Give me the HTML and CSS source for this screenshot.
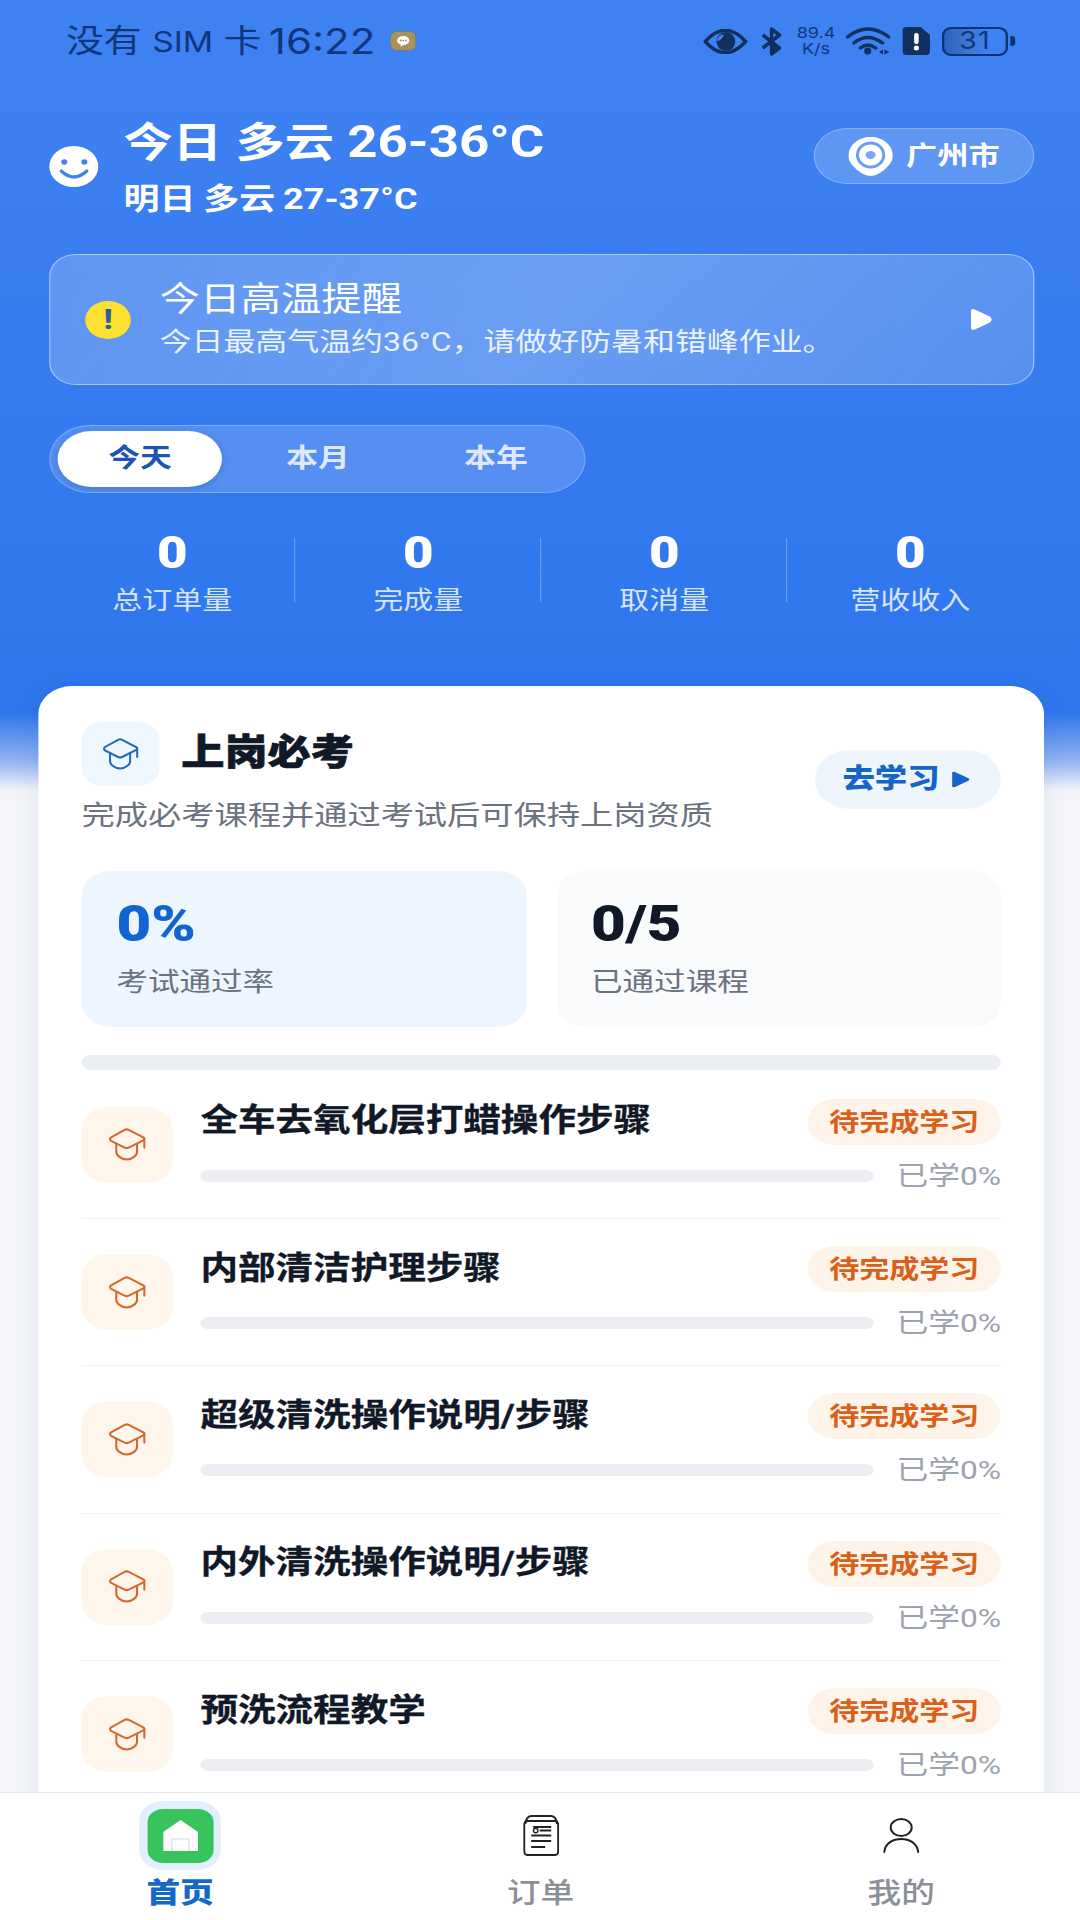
FILE: index.html
```html
<!DOCTYPE html>
<html lang="zh-CN">
<head>
<meta charset="utf-8">
<title>首页</title>
<link rel="stylesheet" href="styles.css">
</head>
<body>
<svg class="defs" width="0" height="0" aria-hidden="true">
  <symbol id="cap" viewBox="0 0 37 32" preserveAspectRatio="none">
    <path d="M16 1.8Q18 .8 20 1.8L34 9Q36 10.5 34 12L20 19Q18 20 16 19L3 12.5Q.8 10.5 3 9Z" fill="none" stroke="currentColor" stroke-width="2"/>
    <path d="M8 15.5V23Q8 26 11 28Q14 30.5 18 30.5Q22 30.5 25 28Q28 26 28 23V15.5M35 10V19" fill="none" stroke="currentColor" stroke-width="2" stroke-linecap="round"/>
  </symbol>
</svg>
<div class="app">
  <div class="status">
    <div class="status-left">
      <span class="carrier">没有 <span class="carrier-sim">SIM</span> 卡</span>
      <span class="clock">16:22</span>
      <svg class="ic-note" viewBox="0 0 26 20" preserveAspectRatio="none"><rect x=".5" y=".5" width="25" height="19" rx="6" fill="#a8935f" stroke="#6c7f86"/><ellipse cx="13" cy="9.5" rx="6" ry="4.6" fill="#fff"/><path d="M11 13l-1 3 4-2.5z" fill="#fff"/><circle cx="10.5" cy="9.5" r=".9" fill="#a8935f"/><circle cx="13" cy="9.5" r=".9" fill="#a8935f"/><circle cx="15.5" cy="9.5" r=".9" fill="#a8935f"/></svg>
    </div>
    <div class="status-right">
      <svg class="ic-eye" viewBox="0 0 45 25" preserveAspectRatio="none"><path d="M2 12.5Q22.5-10 43 12.5Q22.5 35 2 12.5Z" fill="none" stroke="#12305f" stroke-width="3.4"/><circle cx="23" cy="12.5" r="9.5" fill="#12305f"/><path d="M13.5 12Q19 12 21 5.5Q15.5 5 13.5 12Z" fill="#3f82f2"/></svg>
      <svg class="ic-bt" viewBox="0 0 22 29" preserveAspectRatio="none"><path d="M2 8L19 21L11 27V2L19 8L2 21" fill="none" stroke="#12305f" stroke-width="3.6" stroke-linejoin="round"/><path d="M11 15l8 6-8 6z" fill="#12305f"/></svg>
      <div class="speed"><span>89.4</span><span>K/s</span></div>
      <svg class="ic-wifi" viewBox="0 0 45 28" preserveAspectRatio="none"><path d="M1.5 10Q22-6 43.5 10M8 16Q22 5 37 16M14.5 21Q22 15 30 21" fill="none" stroke="#12305f" stroke-width="3.4" stroke-linecap="round"/><circle cx="22" cy="24" r="3.6" fill="#12305f"/><path d="M37.5 22.5v5l-4-2.500zM39 22.500v5l5-2.500z" fill="#12305f"/></svg>
      <svg class="ic-sim" viewBox="0 0 27 28" preserveAspectRatio="none"><path d="M4 0H18L27 8V24A4 4 0 0 1 23 28H4A4 4 0 0 1 0 24V4A4 4 0 0 1 4 0Z" fill="#12305f"/><rect x="11.500" y="6" width="4.400" height="11" rx="2" fill="#fff"/><circle cx="13.700" cy="21" r="2.500" fill="#fff"/></svg>
      <div class="battery"><span>31</span></div>
      <div class="battery-tip"></div>
    </div>
  </div>

  <div class="weather">
    <svg class="ic-smile" viewBox="0 0 49 41" preserveAspectRatio="none"><ellipse cx="24.500" cy="20.500" rx="24.500" ry="20.500" fill="#fff"/><ellipse cx="15" cy="16" rx="3" ry="2.700" fill="#3f82f2"/><ellipse cx="35" cy="16" rx="3" ry="2.700" fill="#3f82f2"/><path d="M12 25Q24.500 37 37.500 25" fill="none" stroke="#3f82f2" stroke-width="3.200" stroke-linecap="round"/></svg>
    <div class="weather-text">
      <div class="weather-now">今日 多云 <span class="num-now">26-36°C</span></div>
      <div class="weather-next">明日 多云 <span class="num-next">27-37°C</span></div>
    </div>
    <div class="city">
      <svg class="ic-pin" viewBox="0 0 44 39" preserveAspectRatio="none"><path d="M22 0C34 0 44 8 44 19C44 28 30 39 22 39C14 39 0 28 0 19C0 8 10 0 22 0Z" fill="#fff"/><ellipse cx="22" cy="18" rx="13" ry="12" fill="none" stroke="#6b9df3" stroke-width="3"/><ellipse cx="22" cy="18" rx="5" ry="4" fill="#7ba6f0"/></svg>
      <span>广州市</span>
    </div>
  </div>

  <div class="alert">
    <div class="alert-dot">!</div>
    <div class="alert-text">
      <div class="alert-title">今日高温提醒</div>
      <div class="alert-sub">今日最高气温约36°C，请做好防暑和错峰作业。</div>
    </div>
    <svg class="ic-play-w" viewBox="0 0 21 23" preserveAspectRatio="none"><path d="M4 1.500L18.500 8.500Q22 11.500 18.500 14.500L4 21.500Q0 23 0 19V4Q0 0 4 1.500Z" fill="#fff"/></svg>
  </div>

  <div class="segment">
    <div class="seg seg-on">今天</div>
    <div class="seg">本月</div>
    <div class="seg">本年</div>
  </div>

  <div class="stats">
    <div class="stat"><div class="stat-num">0</div><div class="stat-label">总订单量</div></div>
    <div class="stat"><div class="stat-num">0</div><div class="stat-label">完成量</div></div>
    <div class="stat"><div class="stat-num">0</div><div class="stat-label">取消量</div></div>
    <div class="stat"><div class="stat-num">0</div><div class="stat-label">营收收入</div></div>
  </div>

  <div class="card">
    <div class="card-head">
      <div class="card-head-left">
        <div class="card-title-row">
          <div class="cap-box"><svg class="ic-cap-blue"><use href="#cap"/></svg></div>
          <div class="card-title">上岗必考</div>
        </div>
        <div class="card-sub">完成必考课程并通过考试后可保持上岗资质</div>
      </div>
      <div class="go">
        <span>去学习</span>
        <svg class="ic-play-b" viewBox="0 0 16 17" preserveAspectRatio="none"><path d="M2.500 .800L15 7.300Q16.500 8.500 15 9.700L2.500 16.200Q.500 16.800 .500 15V2Q.500 .200 2.500 .800Z" fill="#1565c8"/></svg>
      </div>
    </div>

    <div class="boxes">
      <div class="box box-blue"><div class="box-val val-blue">0%</div><div class="box-label">考试通过率</div></div>
      <div class="box box-gray"><div class="box-val">0/5</div><div class="box-label">已通过课程</div></div>
    </div>
    <div class="bar-main"></div>

    <div class="row">
      <div class="row-icon"><svg class="ic-cap-orange"><use href="#cap"/></svg></div>
      <div class="row-body">
        <div class="row-top"><div class="row-title">全车去氧化层打蜡操作步骤</div><div class="badge">待完成学习</div></div>
        <div class="row-bottom"><div class="row-bar"></div><div class="row-pct">已学0%</div></div>
      </div>
    </div>
    <div class="row">
      <div class="row-icon"><svg class="ic-cap-orange"><use href="#cap"/></svg></div>
      <div class="row-body">
        <div class="row-top"><div class="row-title">内部清洁护理步骤</div><div class="badge">待完成学习</div></div>
        <div class="row-bottom"><div class="row-bar"></div><div class="row-pct">已学0%</div></div>
      </div>
    </div>
    <div class="row">
      <div class="row-icon"><svg class="ic-cap-orange"><use href="#cap"/></svg></div>
      <div class="row-body">
        <div class="row-top"><div class="row-title">超级清洗操作说明/步骤</div><div class="badge">待完成学习</div></div>
        <div class="row-bottom"><div class="row-bar"></div><div class="row-pct">已学0%</div></div>
      </div>
    </div>
    <div class="row">
      <div class="row-icon"><svg class="ic-cap-orange"><use href="#cap"/></svg></div>
      <div class="row-body">
        <div class="row-top"><div class="row-title">内外清洗操作说明/步骤</div><div class="badge">待完成学习</div></div>
        <div class="row-bottom"><div class="row-bar"></div><div class="row-pct">已学0%</div></div>
      </div>
    </div>
    <div class="row">
      <div class="row-icon"><svg class="ic-cap-orange"><use href="#cap"/></svg></div>
      <div class="row-body">
        <div class="row-top"><div class="row-title">预洗流程教学</div><div class="badge">待完成学习</div></div>
        <div class="row-bottom"><div class="row-bar"></div><div class="row-pct">已学0%</div></div>
      </div>
    </div>
  </div>

  <div class="tabbar">
    <div class="tab tab-on">
      <div class="tab-icon">
        <div class="home-halo"><div class="home-green">
          <svg class="ic-house" viewBox="0 0 35 31" preserveAspectRatio="none"><path d="M17.500 0L35 12V31H0V12Z" fill="#fff"/><path d="M8.700 31V19H26V31" fill="none" stroke="#d3dbd6" stroke-width="1"/></svg>
        </div></div>
      </div>
      <div class="tab-label">首页</div>
    </div>
    <div class="tab">
      <div class="tab-icon">
        <svg class="ic-order" viewBox="0 0 36 41" preserveAspectRatio="none"><rect x="1" y="6" width="34" height="34" rx="3.500" fill="none" stroke="#222" stroke-width="2"/><path d="M2 9Q3 1.500 8 1H28Q33 1.500 34 9" fill="none" stroke="#222" stroke-width="2"/><circle cx="12.500" cy="15.500" r="2.200" fill="none" stroke="#222" stroke-width="1.400"/><path d="M10 12H28M16.500 15.500H28M8 20.500H28M8 26H28M8 32H22" fill="none" stroke="#222" stroke-width="1.800"/></svg>
      </div>
      <div class="tab-label">订单</div>
    </div>
    <div class="tab">
      <div class="tab-icon">
        <svg class="ic-person" viewBox="0 0 36 35" preserveAspectRatio="none"><ellipse cx="18" cy="9.500" rx="10.500" ry="8.500" fill="none" stroke="#222" stroke-width="2"/><path d="M1 34C2 25 10 21 18 21C26 21 34 25 35 34" fill="none" stroke="#222" stroke-width="2" stroke-linecap="round"/></svg>
      </div>
      <div class="tab-label">我的</div>
    </div>
  </div>
</div>
</body>
</html>
```

FILE: styles.css
```css
* { box-sizing: border-box; }
html, body { margin: 0; padding: 0; width: 1080px; height: 1920px; overflow: hidden; background: #f3f5f8; }
.defs { display: block; height: 0; }

/* The reference is a capture squeezed vertically: everything reads 1.2x wider than tall. */
.app {
  width: 900px;
  height: 1920px;
  position: relative;
  overflow: hidden;
  transform: scale(1.2, 1);
  transform-origin: 0 0;
  font-family: Roboto, "Noto Sans CJK SC", sans-serif;
  background: linear-gradient(180deg, #3f82f2 0, #2e75ed 712px, #8fb2ef 760px, #f0f3f7 790px, #f3f5f8 800px);
}

.status { height: 115px; display: flex; justify-content: space-between; padding: 24px 54px 0 55px; align-items: flex-start; color: #10367c; font-family: Inter, "Noto Sans CJK SC", sans-serif; }
.status-left { display: flex; align-items: center; height: 34px; }
.carrier { font-size: 31.500px; line-height: 34px; }
.carrier-sim { font-size: 28px; }
.clock { font-size: 35px; line-height: 34px; margin-left: 6px; }
.ic-note { width: 22px; height: 20px; margin-left: 12px; }
.status-right { display: flex; align-items: center; height: 34px; }
.ic-eye { width: 37px; height: 25px; }
.ic-bt { width: 18px; height: 29px; margin-left: 11px; }
.speed { width: 34px; margin-left: 11px; display: flex; flex-direction: column; align-items: center; font-size: 15px; line-height: 16px; }
.ic-wifi { width: 37px; height: 28px; margin-left: 8px; }
.ic-sim { width: 23px; height: 28px; margin-left: 10px; }
.battery { width: 55px; height: 29px; margin-left: 10px; border: 2.500px solid #0f3275; border-radius: 8px; background: linear-gradient(90deg, #2d62bd 0, #3f78d8 45%, rgba(63,130,242,0) 70%); display: flex; align-items: center; justify-content: center; font-size: 24px; line-height: 24px; color: #10367c; letter-spacing: 1px; }
.battery-tip { width: 4px; height: 10px; margin-left: 2px; border-radius: 0 3px 3px 0; background: #0f3275; }

.weather { height: 102px; padding: 0 38px 0 41px; display: flex; align-items: center; color: #fff; }
.ic-smile { width: 41px; height: 41px; flex: none; }
.weather-text { margin-left: 21px; flex: 1; }
.weather-now { font-size: 41px; line-height: 50px; font-weight: 700; word-spacing: 1px; margin-top: 2px; }
.num-now { font-size: 44px; }
.weather-next { font-size: 30px; line-height: 38px; font-weight: 700; margin-top: 12px; word-spacing: -1px; }
.num-next { font-size: 30px; }
.city { width: 184px; height: 56px; margin-bottom: 20px; border: 1px solid rgba(255,255,255,.25); border-radius: 28px; background: rgba(255,255,255,.18); display: flex; align-items: center; justify-content: center; gap: 11px; font-size: 26px; line-height: 50px; font-weight: 700; }
.ic-pin { width: 37px; height: 39px; }

.alert { margin: 37px 38px 0 41px; height: 131px; border: 1px solid rgba(255,255,255,.45); border-radius: 22px; background: linear-gradient(120deg, rgba(255,255,255,.2), rgba(255,255,255,.26) 50%, rgba(255,255,255,.16)); display: flex; align-items: center; padding: 0 34px 0 29px; color: #fff; }
.alert-dot { width: 38px; height: 38px; border-radius: 50%; background: #fde030; color: #2d5f9a; font-size: 28px; font-weight: 800; line-height: 37px; text-align: center; flex: none; }
.alert-text { margin-left: 24px; flex: 1; }
.alert-title { font-size: 33.700px; line-height: 44px; }
.alert-sub { font-size: 26.600px; line-height: 38px; color: #eaf1ff; margin-top: 1px; }
.ic-play-w { width: 18px; height: 23px; flex: none; }

.segment { margin: 40px 0 0 41px; width: 447px; height: 68px; padding: 5px 5px 5px 6px; border: 1px solid rgba(255,255,255,.22); border-radius: 34px; background: rgba(255,255,255,.16); display: flex; gap: 11px; }
.seg { width: 138px; height: 56px; border-radius: 28px; display: flex; align-items: center; justify-content: center; font-size: 26.500px; line-height: 52px; padding-bottom: 2px; font-weight: 700; color: #dfe9fb; }
.seg-on { background: #fff; color: #1a56b0; box-shadow: 0 2px 6px rgba(20,60,130,.25); }

.stats { margin: 38px 40px 0 40px; display: grid; grid-template-columns: repeat(4, 1fr); color: #fff; }
.stat { position: relative; text-align: center; padding-left: 2px; }
.stat + .stat::before { content: ""; position: absolute; left: 0; top: 7px; height: 64px; width: 1px; background: rgba(255,255,255,.28); }
.stat-num { font-size: 44px; line-height: 44px; font-weight: 900; }
.stat-label { font-size: 25px; line-height: 34px; margin-top: 9px; color: #d5e4fc; }

.card { margin: 68px 0 0 32px; width: 838px; height: 1300px; padding: 36px 36px 0; background: #fff; border-radius: 28px 28px 0 0; box-shadow: 0 0 24px rgba(30,50,100,.07); }
.card-head { display: flex; justify-content: space-between; align-items: flex-start; }
.card-title-row { display: flex; gap: 18px; }
.cap-box { width: 65px; height: 64px; border-radius: 18px; background: #eef6fe; display: flex; align-items: center; justify-content: center; }
.ic-cap-blue { width: 31px; height: 32px; color: #2168b6; }
.card-title { font-size: 36px; line-height: 62px; font-weight: 900; color: #111827; -webkit-text-stroke: .7px #111827; }
.card-sub { font-size: 27.700px; line-height: 38px; margin-top: 11px; color: #6b7280; }
.go { width: 155px; height: 59px; margin-top: 28px; padding: 0 3px 0 0; border-radius: 30px; background: #eef5fd; display: flex; align-items: center; justify-content: center; gap: 10px; font-size: 27px; line-height: 55px; font-weight: 800; color: #1565c8; }
.go span { margin-top: -1px; }
.ic-play-b { width: 15px; height: 17px; }

.boxes { display: flex; gap: 25px; margin-top: 36px; }
.box { flex: 1; height: 156px; border-radius: 24px; padding: 27px 29px 0; }
.box-blue { background: #edf6fe; }
.box-gray { background: #f8fafc; }
.box-val { font-size: 50px; line-height: 52px; font-weight: 900; color: #111827; }
.val-blue { color: #1264d0; }
.box-label { font-size: 26.300px; line-height: 36px; margin-top: 14px; color: #6b7280; }
.bar-main { height: 15px; margin: 28px 0 1.500px; border-radius: 8px; background: #ebeef3; }

.row { height: 147.400px; display: flex; align-items: center; gap: 23px; border-bottom: 1px solid #f1f2f5; }
.row-icon { width: 76px; height: 76px; flex: none; border-radius: 22px; background: #fef5eb; display: flex; align-items: center; justify-content: center; }
.ic-cap-orange { width: 32px; height: 33px; color: #d2692f; }
.row-body { flex: 1; min-width: 0; padding-top: 2px; }
.row-top { display: flex; justify-content: space-between; align-items: center; }
.row-title { font-size: 31.300px; line-height: 46px; font-weight: 700; color: #111827; margin-top: -1px; -webkit-text-stroke: .3px #111827; }
.badge { width: 161px; height: 46px; padding-bottom: 4px; border-radius: 23px; background: #fef3e8; display: flex; align-items: center; justify-content: center; font-size: 25px; font-weight: 700; color: #d9601a; }
.row-bottom { display: flex; align-items: center; gap: 19px; margin-top: 14px; }
.row-bar { flex: 1; height: 12px; border-radius: 6px; background: #eceef3; }
.row-pct { width: 87px; text-align: right; white-space: nowrap; font-size: 26.500px; line-height: 34px; color: #9ca3af; }

.tabbar { position: absolute; left: 0; right: 0; bottom: 0; height: 128px; padding-top: 8px; background: #fff; border-top: 1px solid #e6e8ec; display: grid; grid-template-columns: 300px 301px 300px; }
.tab { display: flex; flex-direction: column; align-items: center; }
.tab-icon { height: 69px; display: flex; align-items: center; justify-content: center; }
.tab-label { font-size: 28px; line-height: 34px; margin-top: 7px; color: #8b8f98; font-weight: 500; }
.tab-on .tab-label { color: #1368c9; font-weight: 800; }
.home-halo { width: 68px; height: 69px; border-radius: 20px; background: #e1f0fc; display: flex; align-items: center; justify-content: center; }
.home-green { width: 55px; height: 54px; border-radius: 13px; background: #37c45c; display: flex; align-items: center; justify-content: center; }
.ic-house { width: 29px; height: 31px; }
.ic-order { width: 30px; height: 41px; }
.ic-person { width: 30px; height: 35px; }
```
